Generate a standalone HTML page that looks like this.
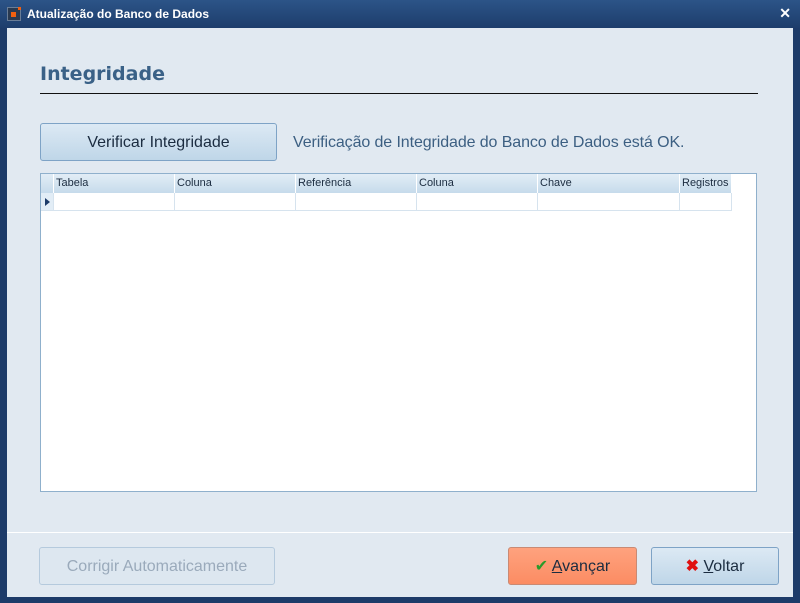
<!DOCTYPE html>
<html><head><style>
*{margin:0;padding:0;box-sizing:border-box}
body{width:800px;height:603px;background:#1d3b69;font-family:"Liberation Sans",sans-serif;position:relative;overflow:hidden}
.title{position:absolute;left:0;top:0;width:800px;height:28px;background:linear-gradient(#2c5488,#1d3d6c);}
.title span{position:absolute;left:27px;top:7px;color:#fff;font-size:12px;font-weight:bold}
.ico{position:absolute;left:7px;top:7px;width:14px;height:14px;background:#2a3a50;border:1px solid #6a7d96}
.ico i{position:absolute;left:3px;top:4px;width:5px;height:5px;background:#f06010}
.ico b{position:absolute;right:-1px;top:-1px;width:3px;height:3px;background:#f06010}
.x{position:absolute;right:9px;top:5px;color:#fff;font-size:14px;font-weight:bold}
.content{position:absolute;left:7px;top:28px;width:786px;height:569px;background:#e1e9f1}
.h{position:absolute;left:40px;top:63px;color:#3a6187;font-size:19px;font-weight:bold;font-family:"DejaVu Sans",sans-serif}
.hl{position:absolute;left:40px;top:93px;width:718px;height:1px;background:#111}
.btn{position:absolute;border:1px solid #7ea3c6;border-radius:3px;background:linear-gradient(#dce9f4,#bfd6e8);font-size:16px;color:#1b2c40;text-align:center}
.msg{position:absolute;left:293px;top:134px;font-size:16px;color:#3c5f82;letter-spacing:-0.1px}
.grid{position:absolute;left:40px;top:173px;width:717px;height:319px;background:#fff;border:1px solid #8fb0cc}
.hd{position:absolute;top:0;height:19px;background:linear-gradient(#e2edf6,#c6dbeb);border-right:1px solid #fff;font-size:11px;color:#1b2c40;padding:3px 0 0 2px}
.cell{position:absolute;top:19px;height:18px;border-right:1px solid #d6e3ee;border-bottom:1px solid #d6e3ee}
.sep{position:absolute;left:7px;top:532px;width:786px;height:1px;background:#fff}
</style></head><body>
<div class="title"><div class="ico"><i></i><b></b></div><span>Atualização do Banco de Dados</span><div class="x">✕</div></div>
<div class="content"></div>
<div class="h">Integridade</div><div class="hl"></div>
<div class="btn" style="left:40px;top:123px;width:237px;height:38px;line-height:38px">Verificar Integridade</div>
<div class="msg">Verificação de Integridade do Banco de Dados está OK.</div>
<div class="grid">
<div class="hd" style="left:0;width:13px"></div>
<div class="hd" style="left:13px;width:121px">Tabela</div>
<div class="hd" style="left:134px;width:121px">Coluna</div>
<div class="hd" style="left:255px;width:121px">Referência</div>
<div class="hd" style="left:376px;width:121px">Coluna</div>
<div class="hd" style="left:497px;width:142px">Chave</div>
<div class="hd" style="left:639px;width:52px">Registros</div>
<div class="cell" style="left:0;width:13px;background:#e2edf6"><div style="position:absolute;left:4px;top:5px;width:0;height:0;border-left:5px solid #1d3b69;border-top:4px solid transparent;border-bottom:4px solid transparent"></div></div>
<div class="cell" style="left:13px;width:121px"></div>
<div class="cell" style="left:134px;width:121px"></div>
<div class="cell" style="left:255px;width:121px"></div>
<div class="cell" style="left:376px;width:121px"></div>
<div class="cell" style="left:497px;width:142px"></div>
<div class="cell" style="left:639px;width:52px"></div>
</div>
<div class="sep"></div>
<div class="btn" style="left:39px;top:547px;width:236px;height:38px;line-height:38px;color:#9aaabb;background:#dde7f0;border-color:#b5cadd">Corrigir Automaticamente</div>
<div class="btn" style="left:508px;top:547px;width:129px;height:38px;line-height:38px;background:linear-gradient(#ffa27e,#fb8c63);border-color:#c98a74"><span style="color:#2a9a2a">✔</span> <u>A</u>vançar</div>
<div class="btn" style="left:651px;top:547px;width:128px;height:38px;line-height:38px"><span style="color:#e01010;font-weight:bold">✖</span> <u>V</u>oltar</div>
</body></html>
